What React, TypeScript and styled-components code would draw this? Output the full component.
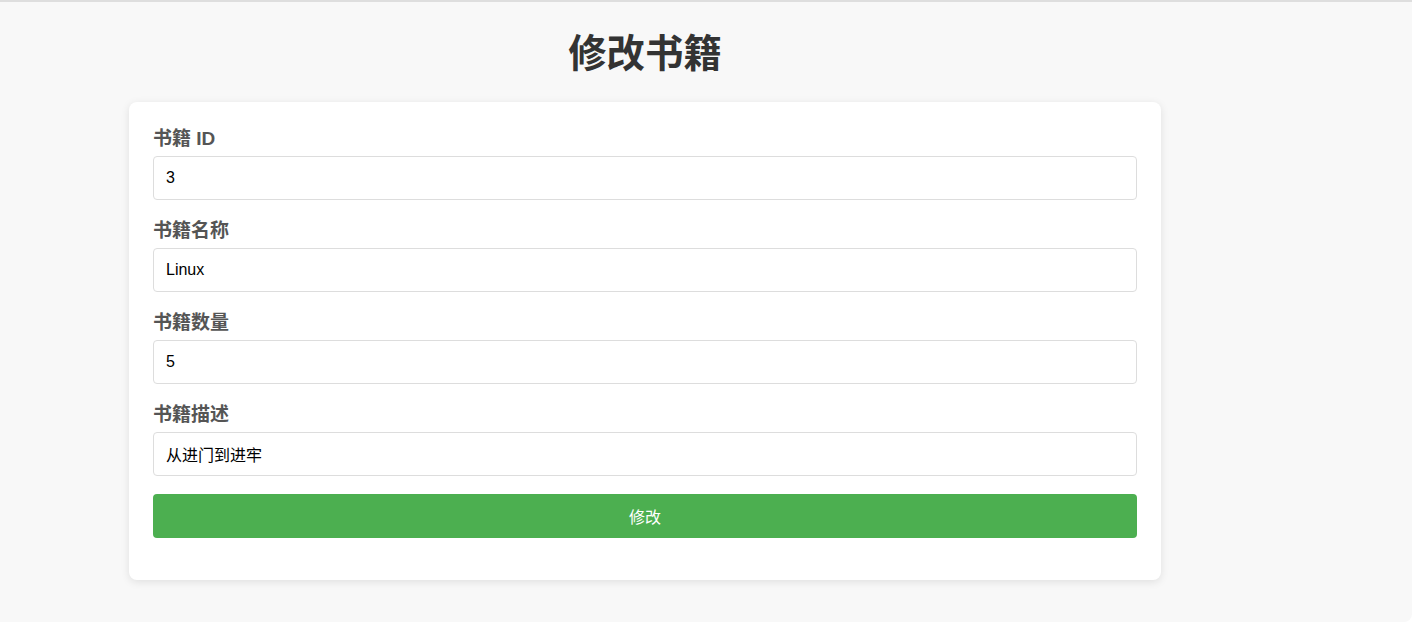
import React, { useState } from 'react'
import styled, { createGlobalStyle } from 'styled-components'

const GlobalStyle = createGlobalStyle`
  body {
    margin: 0;
    background: #ffffff;
    font-family: "Liberation Sans", Arial, "Noto Sans CJK SC", sans-serif;
  }
`

const Page = styled.div`
  box-sizing: border-box;
  height: 622px;
  background: #f8f8f8;
  border-top: 2px solid #dedede;
  border-bottom-right-radius: 8px;
`

const Main = styled.div`
  width: 1290px;
`

const Title = styled.h1`
  margin: 20px 0 24px;
  text-align: center;
  font-size: 38.4px;
  font-weight: bold;
  color: #333;
`

const Card = styled.form`
  width: 80%;
  margin: 0 auto;
  box-sizing: border-box;
  padding: 24px 24px 42px;
  background: #fff;
  border-radius: 8px;
  box-shadow: 0 2px 8px rgba(0, 0, 0, 0.1);
`

const Field = styled.div`
  margin-bottom: 18px;
`

const Label = styled.label`
  display: block;
  margin-bottom: 4px;
  font-size: 19px;
  line-height: 26px;
  font-weight: bold;
  color: #555;
`

const Input = styled.input`
  display: block;
  width: 100%;
  box-sizing: border-box;
  height: 44px;
  padding: 0 12px;
  border: 1px solid #ddd;
  border-radius: 4px;
  font-family: inherit;
  font-size: 16px;
  color: #000;
  background: #fff;
  outline: none;
`

const Button = styled.button`
  display: block;
  width: 100%;
  height: 44px;
  border: none;
  border-radius: 4px;
  background: #4caf50;
  color: #fff;
  font-family: inherit;
  font-size: 16px;
  cursor: pointer;
`

const fields = [
  { id: 'bookId', label: '书籍 ID', value: '3' },
  { id: 'bookName', label: '书籍名称', value: 'Linux' },
  { id: 'bookCount', label: '书籍数量', value: '5' },
  { id: 'bookDesc', label: '书籍描述', value: '从进门到进牢' },
]

const App: React.FC = () => {
  const [data, setData] = useState<Record<string, string>>(
    Object.fromEntries(fields.map((f) => [f.id, f.value]))
  )

  return (
    <Page>
      <GlobalStyle />
      <Main>
        <Title>修改书籍</Title>
        <Card onSubmit={(e) => e.preventDefault()}>
          {fields.map((f) => (
            <Field key={f.id}>
              <Label htmlFor={f.id}>{f.label}</Label>
              <Input
                id={f.id}
                value={data[f.id]}
                onChange={(e) => setData({ ...data, [f.id]: e.target.value })}
              />
            </Field>
          ))}
          <Button type="submit">修改</Button>
        </Card>
      </Main>
    </Page>
  )
}

export default App
